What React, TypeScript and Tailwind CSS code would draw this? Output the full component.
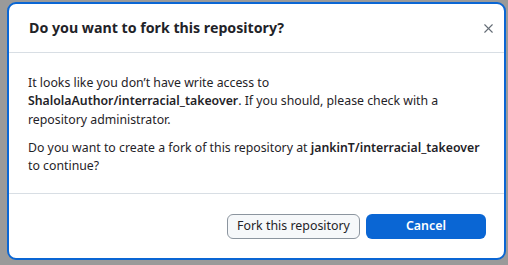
import { X } from "lucide-react";

const App = () => {
    return (
        <main
            className="w-[508px] h-[265px] bg-[#9a9a9a] pt-[2px] pl-[7px] pr-[2px] pb-[5px]"
            style={{ fontFamily: '"Noto Sans", "Liberation Sans", sans-serif' }}
        >
            <div className="h-full flex flex-col bg-white border-2 border-[#0a66d4] rounded-[9px] overflow-hidden text-[#1f2328]">
                {/* header */}
                <div className="h-[49px] shrink-0 flex items-center justify-between pl-[20px] pr-[4px] border-b border-[#d8dee4]">
                    <h1 className="text-[14.2px] font-bold leading-none">Do you want to fork this repository?</h1>
                    <button className="w-6 h-6 flex items-center justify-center text-[#656d76]">
                        <X size={15} strokeWidth={1.8} />
                    </button>
                </div>

                {/* body */}
                <div className="flex-1 px-[19px] pt-[21px] text-[12.3px] leading-[18.3px]">
                    <p>
                        It looks like you don’t have write access to
                        <br />
                        <span className="font-semibold">ShalolaAuthor/interracial_takeover</span>. If you should, please check with a repository administrator.
                    </p>
                    <p className="mt-[10px]">
                        Do you want to create a fork of this repository at{" "}
                        <span className="font-semibold">jankinT/interracial_takeover</span> to continue?
                    </p>
                </div>

                {/* footer */}
                <div className="h-[65px] shrink-0 flex items-center justify-end gap-[6px] pr-[18px] border-t border-[#d8dee4]">
                    <button className="w-[133px] h-[25px] rounded-[6px] border border-[#8c959f] bg-[#f6f8fa] text-[12.4px] text-[#1f2328]">
                        Fork this repository
                    </button>
                    <button className="w-[120px] h-[25px] rounded-[6px] bg-[#0a66d4] text-[12.4px] font-semibold text-white">
                        Cancel
                    </button>
                </div>
            </div>
        </main>
    );
};
export default App;
